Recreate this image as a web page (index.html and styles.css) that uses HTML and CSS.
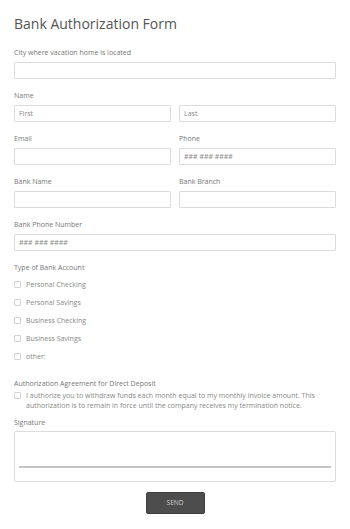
FILE: index.html
```html
<!DOCTYPE html>
<html>
<head>
<meta charset="utf-8">
<link rel="stylesheet" href="styles.css">
</head>
<body>
<form class="form">
  <h1 class="title">Bank Authorization Form</h1>

  <div class="field">
    <label class="label">City where vacation home is located</label>
    <div class="input"></div>
  </div>

  <div class="field">
    <label class="label">Name</label>
    <div class="row">
      <div class="input"><span class="ph">First</span></div>
      <div class="input"><span class="ph">Last</span></div>
    </div>
  </div>

  <div class="row">
    <div class="field">
      <label class="label">Email</label>
      <div class="input"></div>
    </div>
    <div class="field">
      <label class="label">Phone</label>
      <div class="input"><span class="ph">### ### ####</span></div>
    </div>
  </div>

  <div class="row">
    <div class="field">
      <label class="label">Bank Name</label>
      <div class="input"></div>
    </div>
    <div class="field">
      <label class="label">Bank Branch</label>
      <div class="input"></div>
    </div>
  </div>

  <div class="field">
    <label class="label">Bank Phone Number</label>
    <div class="input"><span class="ph">### ### ####</span></div>
  </div>

  <div class="field group">
    <label class="label">Type of Bank Account</label>
    <div class="checks">
      <div class="check"><span class="box"></span><span>Personal Checking</span></div>
      <div class="check"><span class="box"></span><span>Personal Savings</span></div>
      <div class="check"><span class="box"></span><span>Business Checking</span></div>
      <div class="check"><span class="box"></span><span>Business Savings</span></div>
      <div class="check"><span class="box"></span><span>other:</span></div>
    </div>
  </div>

  <div class="field agree">
    <label class="label">Authorization Agreement for Direct Deposit</label>
    <div class="agree-row"><span class="box"></span><span class="agree-text">I authorize you to withdraw funds each month equal to my monthly invoice amount. This<br>authorization is to remain in force until the company receives my termination notice.</span></div>
  </div>

  <div class="field sig">
    <label class="label">Signature</label>
    <div class="sigbox"><div class="sigline"></div></div>
  </div>

  <div class="actions"><button type="button" class="send">SEND</button></div>
</form>
</body>
</html>
```

FILE: styles.css
```css
html, body {
  margin: 0;
  padding: 0;
  background: #ffffff;
}
body {
  font-family: "Open Sans", "Liberation Sans", sans-serif;
  color: #777;
}
.form {
  padding: 14px 14px 0 14px;
  display: flex;
  flex-direction: column;
}
.title {
  margin: 0 0 14px 0;
  font-size: 14px;
  line-height: 20px;
  font-weight: 400;
  color: #555;
}
.field {
  display: flex;
  flex-direction: column;
  margin-bottom: 12px;
}
.row > .field {
  margin-bottom: 0;
}
.row {
  display: grid;
  grid-template-columns: 1fr 1fr;
  column-gap: 8px;
}
.row + .row, .row + .field {
  margin-top: 12px;
}
.label {
  font-size: 7px;
  line-height: 10px;
  color: #777;
  margin-bottom: 4px;
}
.input {
  height: 17px;
  box-sizing: border-box;
  border: 1px solid #dcdcdc;
  border-radius: 1px;
  padding-left: 4px;
  display: flex;
  align-items: center;
}
.ph {
  font-size: 7px;
  color: #888;
}
.group .label {
  margin-bottom: 2px;
}
.checks {
  display: flex;
  flex-direction: column;
}
.check {
  height: 18.2px;
  display: flex;
  align-items: center;
  gap: 5px;
  font-size: 7px;
  color: #888;
}
.box {
  width: 7px;
  height: 7px;
  box-sizing: border-box;
  border: 1px solid #d2d2d2;
  border-radius: 1px;
  flex: none;
}
.group {
  margin-bottom: 13px;
}
.agree .label {
  margin-bottom: 2px;
}
.agree-row {
  display: flex;
  align-items: flex-start;
  gap: 5px;
}
.agree-row .box {
  margin-top: 1.5px;
}
.agree-text {
  font-size: 7px;
  line-height: 10px;
  color: #888;
  white-space: nowrap;
}
.agree {
  margin-bottom: 7px;
}
.sig .label {
  margin-bottom: 3px;
}
.sigbox {
  height: 51px;
  box-sizing: border-box;
  border: 1px solid #dcdcdc;
  border-radius: 2px;
  display: flex;
  flex-direction: column;
  justify-content: flex-end;
  padding: 0 4px 13px 4px;
}
.sigline {
  height: 1.5px;
  background: #c4c4c4;
}
.sig {
  margin-bottom: 10px;
}
.actions {
  display: flex;
  justify-content: center;
}
.send {
  width: 59px;
  height: 22px;
  background: #4d4d4d;
  border: 1px solid #3f3f3f;
  border-radius: 2px;
  color: #d0d0d0;
  font-family: "Open Sans", "Liberation Sans", sans-serif;
  font-size: 6.5px;
  padding: 0;
}
```
